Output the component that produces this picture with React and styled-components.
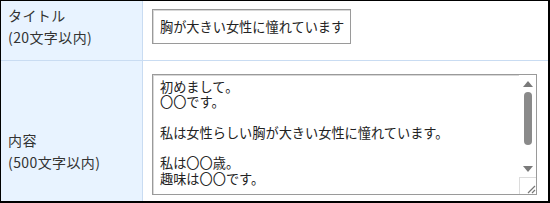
import React from "react";
import styled, { createGlobalStyle } from "styled-components";

const Global = createGlobalStyle`
  html, body { margin: 0; padding: 0; background: #fff; }
  body { font-family: "Noto Sans CJK JP", "Noto Sans", sans-serif; color: #333; }
`;

const Frame = styled.div`
  width: 550px;
  height: 203px;
  box-sizing: border-box;
  border-top: 1px solid #000;
  border-left: 1px solid #000;
  border-right: 2px solid #000;
  border-bottom: 2px solid #000;
  overflow: hidden;
`;

const Row = styled.div`
  display: flex;
  height: ${(p) => p.h}px;
  border-bottom: ${(p) => (p.last ? "none" : "1px solid #c9dcf2")};
`;

const Label = styled.div`
  width: 142px;
  flex-shrink: 0;
  box-sizing: border-box;
  background: #e8f3ff;
  border-right: 1px solid #c9dcf2;
  padding: ${(p) => p.pad};
  font-size: 14px;
  line-height: 22px;
  letter-spacing: 0.4px;
  color: #333;
`;

const Field = styled.div`
  flex: 1;
  padding: ${(p) => p.pad};
`;

const Input = styled.div`
  width: 199px;
  height: 35px;
  box-sizing: border-box;
  border: 1px solid #9a9a9a;
  box-shadow: inset 1px 1px 0 #d8d8d8;
  padding: 0 6px 0 7px;
  display: flex;
  align-items: center;
  white-space: nowrap;
  overflow: hidden;
  font-size: 13.2px;
  color: #222;
`;

const Area = styled.div`
  width: 385px;
  height: 121px;
  box-sizing: border-box;
  border: 1px solid #9a9a9a;
  box-shadow: inset 1px 1px 0 #d8d8d8;
  display: flex;
`;

const AreaText = styled.div`
  flex: 1;
  overflow: hidden;
  padding: 4px 7px;
  font-size: 13.2px;
  line-height: 15.3px;
  color: #222;
  white-space: pre;
`;

const Scroll = styled.div`
  width: 17px;
  display: flex;
  flex-direction: column;
  align-items: center;
  background: #fff;
`;

const Arrow = styled.div`
  height: ${(p) => p.h}px;
  display: flex;
  align-items: center;
  justify-content: center;
`;

const Track = styled.div`
  flex: 1;
  width: 100%;
  display: flex;
  justify-content: center;
`;

const Thumb = styled.div`
  width: 8px;
  height: 53px;
  border-radius: 4px;
  background: #8a8a8a;
`;

const Grip = styled.div`
  width: 17px;
  height: 17px;
  box-sizing: border-box;
  border-top: 1px solid #dcdcdc;
  border-left: 1px solid #dcdcdc;
  display: flex;
  align-items: flex-end;
  justify-content: flex-end;
`;

const content = `初めまして。
〇〇です。

私は女性らしい胸が大きい女性に憧れています。

私は〇〇歳。
趣味は〇〇です。`;

export default function App() {
  return (
    <>
      <Global />
      <Frame>
        <Row h={59}>
          <Label pad="3px 7px">
            タイトル
            <br />
            (20文字以内)
          </Label>
          <Field pad="8px 9px">
            <Input>胸が大きい女性に憧れています</Input>
          </Field>
        </Row>
        <Row h={141} last>
          <Label pad="68px 7px 0">
            内容
            <br />
            (500文字以内)
          </Label>
          <Field pad="13px 9px">
            <Area>
              <AreaText>{content}</AreaText>
              <Scroll>
                <Arrow h={17}>
                  <svg width="10" height="6" viewBox="0 0 10 6">
                    <path d="M0 6 L5 0 L10 6 Z" fill="#7a7a7a" />
                  </svg>
                </Arrow>
                <Track>
                  <Thumb />
                </Track>
                <Arrow h={17}>
                  <svg width="10" height="6" viewBox="0 0 10 6">
                    <path d="M0 0 L10 0 L5 6 Z" fill="#7a7a7a" />
                  </svg>
                </Arrow>
                <Grip>
                  <svg width="10" height="10" viewBox="0 0 10 10">
                    <path d="M9 2 L2 9 M9 6 L6 9" stroke="#777" strokeWidth="1.2" />
                  </svg>
                </Grip>
              </Scroll>
            </Area>
          </Field>
        </Row>
      </Frame>
    </>
  );
}
